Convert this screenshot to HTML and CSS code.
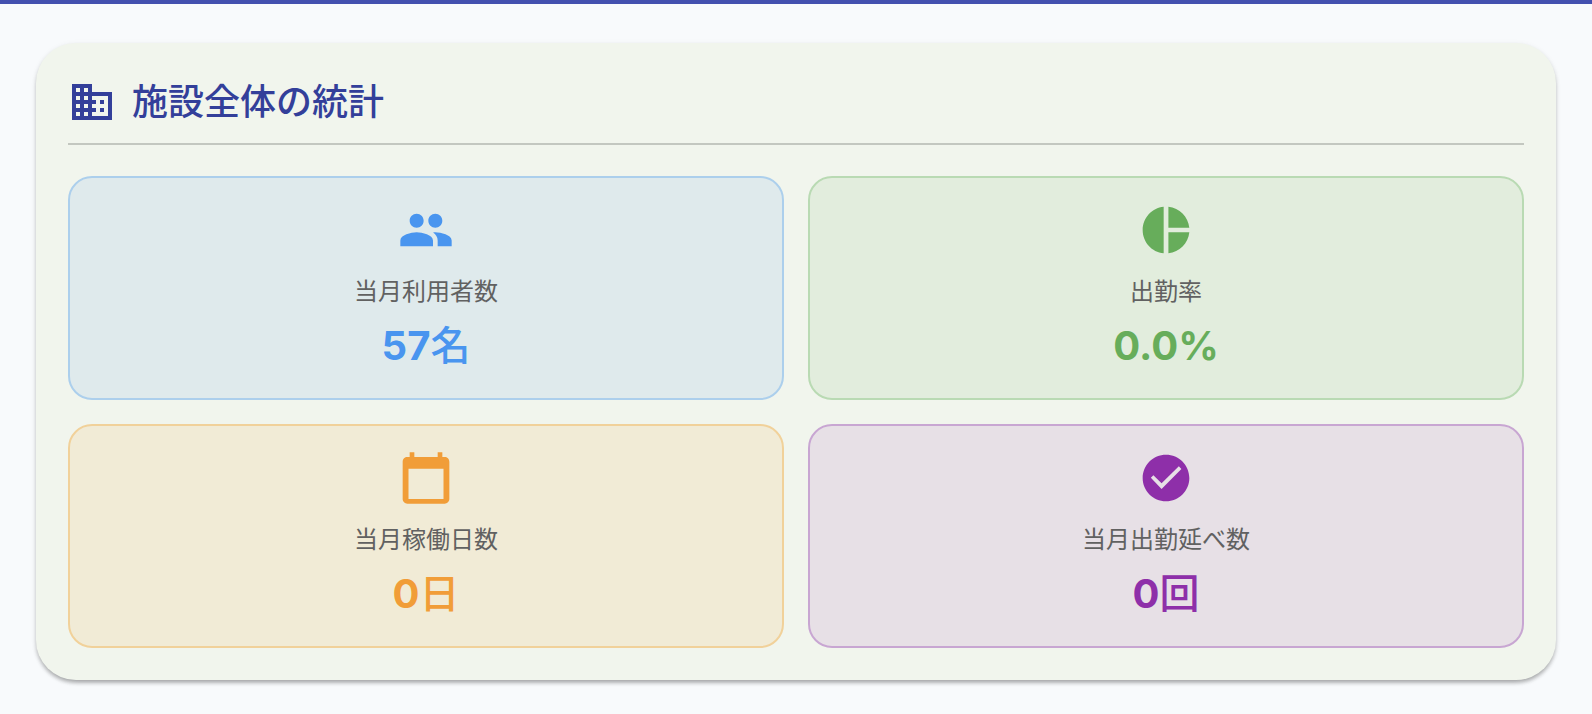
FILE: index.html
```html
<!DOCTYPE html>
<html lang="ja">
<head>
<meta charset="utf-8">
<meta name="viewport" content="width=device-width, initial-scale=1">
<title>施設全体の統計</title>
<link rel="stylesheet" href="styles.css">
</head>
<body>
<main class="page">
  <section class="panel" aria-labelledby="panel-title">
    <header class="panel-header">
      <svg class="panel-icon" viewBox="0 0 24 24" aria-hidden="true"><path d="M12 7V3H2v18h20V7H12zM6 19H4v-2h2v2zm0-4H4v-2h2v2zm0-4H4V9h2v2zm0-4H4V5h2v2zm4 12H8v-2h2v2zm0-4H8v-2h2v2zm0-4H8V9h2v2zm0-4H8V5h2v2zm10 12h-8v-2h2v-2h-2v-2h2v-2h-2V9h8v10zm-2-8h-2v2h2v-2zm0 4h-2v2h2v-2z"/></svg>
      <h1 class="panel-title" id="panel-title">施設全体の統計</h1>
    </header>
    <div class="stats">
      <article class="stat stat-users">
        <svg class="stat-icon" viewBox="0 0 24 24" aria-hidden="true"><path d="M16 11c1.66 0 2.99-1.34 2.99-3S17.66 5 16 5c-1.66 0-3 1.34-3 3s1.34 3 3 3zm-8 0c1.66 0 2.99-1.34 2.99-3S9.66 5 8 5C6.34 5 5 6.34 5 8s1.34 3 3 3zm0 2c-2.33 0-7 1.17-7 3.5V19h14v-2.5c0-2.33-4.67-3.5-7-3.5zm8 0c-.29 0-.62.02-.97.05 1.16.84 1.97 1.97 1.97 3.45V19h6v-2.5c0-2.33-4.67-3.5-7-3.5z"/></svg>
        <h2 class="stat-label">当月利用者数</h2>
        <p class="stat-value">57<span class="stat-unit">名</span></p>
      </article>
      <article class="stat stat-rate">
        <svg class="stat-icon" viewBox="0 0 24 24" aria-hidden="true"><path d="M11 2v20c-5.07-.5-9-4.79-9-10s3.93-9.5 9-10zm2.03 0v8.99H22c-.47-4.74-4.24-8.52-8.97-8.99zm0 11.01V22c4.74-.47 8.5-4.25 8.97-8.99h-8.97z"/></svg>
        <h2 class="stat-label">出勤率</h2>
        <p class="stat-value">0.0%</p>
      </article>
      <article class="stat stat-days">
        <svg class="stat-icon" viewBox="0 0 24 24" aria-hidden="true"><path d="M20 3h-1V1h-2v2H7V1H5v2H4c-1.1 0-2 .9-2 2v16c0 1.1.9 2 2 2h16c1.1 0 2-.9 2-2V5c0-1.1-.9-2-2-2zm-.5 18h-15V8h15v13z"/></svg>
        <h2 class="stat-label">当月稼働日数</h2>
        <p class="stat-value">0<span class="stat-unit">日</span></p>
      </article>
      <article class="stat stat-visits">
        <svg class="stat-icon" viewBox="0 0 24 24" aria-hidden="true"><path d="M12 2C6.48 2 2 6.48 2 12s4.48 10 10 10 10-4.48 10-10S17.52 2 12 2zm-1.9 14.7l-4.6-4.8 1.1-1.1 3.5 3.5 7.4-7.3 1.1 1.1-8.5 8.6z"/></svg>
        <h2 class="stat-label">当月出勤延べ数</h2>
        <p class="stat-value">0<span class="stat-unit">回</span></p>
      </article>
    </div>
  </section>
</main>
</body>
</html>
```
FILE: styles.css
```css
* {
  box-sizing: border-box;
}

body {
  margin: 0;
  background: #f8fafc;
  font-family: Inter, "Noto Sans CJK JP", sans-serif;
}

.page {
  border-top: 4px solid #4350af;
  padding: 39px 36px 34px;
}

.panel {
  padding: 32px;
  border-radius: 40px;
  background: #f1f5ed;
  box-shadow: 0 4px 4px -2px rgba(0, 0, 0, 0.2), 0 3px 4px rgba(0, 0, 0, 0.16), 0 1px 6px rgba(0, 0, 0, 0.05);
}

.panel-header {
  display: flex;
  align-items: center;
  gap: 16px;
  margin-bottom: 31px;
  padding-bottom: 14px;
  border-bottom: 2px solid #c3c7c0;
  color: #333f9a;
}

.panel-icon {
  width: 48px;
  height: 48px;
  fill: currentColor;
}

.panel-title {
  margin: 0;
  font-size: 36px;
  font-weight: 500;
  line-height: 54px;
}

.stats {
  display: grid;
  grid-template-columns: repeat(2, 1fr);
  gap: 24px;
}

.stat {
  display: flex;
  flex-direction: column;
  align-items: center;
  padding: 24px 24px 22px;
  border: 2px solid;
  border-radius: 24px;
}

.stat-icon {
  width: 56px;
  height: 56px;
  margin-bottom: 16px;
  fill: currentColor;
}

.stat-label {
  margin: 0 0 6px;
  color: #616161;
  font-size: 24px;
  font-weight: 400;
  line-height: 36px;
}

.stat-value {
  margin: 0;
  font-size: 40px;
  font-weight: 700;
  line-height: 60px;
}

.stat-unit {
  font-weight: 500;
}

.stat-users {
  border-color: #accfec;
  background: #dfeaec;
  color: #4995ef;
}

.stat-rate {
  border-color: #b9dab3;
  background: #e2eddd;
  color: #67ad5b;
}

.stat-days {
  border-color: #f1d19a;
  background: #f1ebd6;
  color: #f19d38;
}

.stat-visits {
  border-color: #c8a6d2;
  background: #e7e0e6;
  color: #8e2fa9;
}
```
